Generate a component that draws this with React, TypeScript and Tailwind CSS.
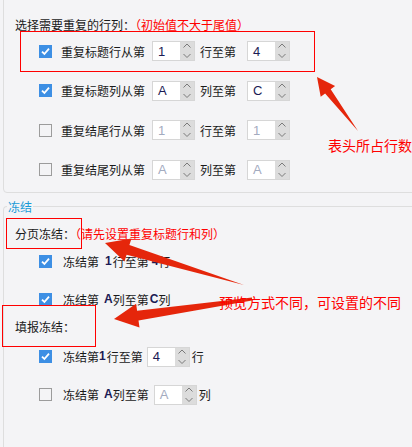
import React from "react";

const RED = "text-[#ff0000]";

function Check({ on }: { on?: boolean }) {
  if (on) {
    return (
      <span className="flex h-[13px] w-[13px] shrink-0 items-center justify-center bg-[#3d8fe4]">
        <svg width="13" height="13" viewBox="0 0 13 13">
          <path d="M3 6.6 L5.4 9 L10 3.6" fill="none" stroke="#fff" strokeWidth="1.8" />
        </svg>
      </span>
    );
  }
  return <span className="h-[13px] w-[13px] shrink-0 border border-[#9c9c9c]" />;
}

function Spin({ value, disabled }: { value: string; disabled?: boolean }) {
  return (
    <div className="flex h-[20px] w-[43px] shrink-0 border border-[#d6d6d6] bg-white">
      <div
        className={`flex flex-1 items-center pl-[5px] font-['Liberation_Sans',sans-serif] text-[13px] ${
          disabled ? "text-[#a3abbf]" : "text-[#1b1b55]"
        }`}
      >
        {value}
      </div>
      <div className="w-[14px] bg-[#dcdcdc]">
        <svg width="14" height="18" viewBox="0 0 14 18">
          <path d="M3.5 5.5 L7 2 L10.5 5.5" fill="none" stroke="#7a7a7a" strokeWidth="1" />
          <path d="M3.5 12 L7 15.5 L10.5 12" fill="none" stroke="#7a7a7a" strokeWidth="1" />
        </svg>
      </div>
    </div>
  );
}

function RepeatRow({ on, label, mid, from, to, disabled }: {
  on?: boolean; label: string; mid: string; from: string; to: string; disabled?: boolean;
}) {
  return (
    <div className="flex h-[20px] items-center">
      <Check on={on} />
      <span className="ml-[9px]">{label}</span>
      <span className="ml-[7px]"><Spin value={from} disabled={disabled} /></span>
      <span className="ml-[5px]">{mid}</span>
      <span className="ml-[11px]"><Spin value={to} disabled={disabled} /></span>
    </div>
  );
}

const B = "font-['Liberation_Sans',sans-serif] font-bold text-[12px] leading-[17px] text-[#1b1b55]";

export default function App() {
  return (
    <div className="relative h-[447px] w-[412px] overflow-hidden bg-[#f4f4f6] font-['Noto_Sans_CJK_SC',sans-serif] text-[12px] leading-[17px] text-[#1a1a1a]">
      {/* 重复 */}
      <div className="ml-[3px] mt-[-8px] w-[430px] rounded-[4px] border border-[#dedede] pb-[12px]">
        <div className="ml-[3px] mt-[-9px] w-fit bg-[#f4f4f6] px-[1px] text-[#1a9bd7]">重复</div>
        <div className="ml-[11px] mt-[14.5px]">
          选择需要重复的行列：<span className={RED}>（初始值不大于尾值）</span>
        </div>
        <div className="ml-[35px] mt-[8.5px] flex flex-col gap-[19.5px]">
          <RepeatRow on label="重复标题行从第" mid="行至第" from="1" to="4" />
          <RepeatRow on label="重复标题列从第" mid="列至第" from="A" to="C" />
          <RepeatRow label="重复结尾行从第" mid="行至第" from="1" to="1" disabled />
          <RepeatRow label="重复结尾列从第" mid="列至第" from="A" to="A" disabled />
        </div>
      </div>

      {/* 冻结 */}
      <div className="ml-[3px] mt-[13px] h-[260px] w-[430px] rounded-tl-[4px] border-l border-t border-[#dedede]">
        <div className="ml-[3px] mt-[-9px] w-fit bg-[#f4f4f6] px-[1px] text-[#1a9bd7]">冻结</div>
        <div className="ml-[11px] mt-[10px]">
          分页冻结：<span className={RED}>（请先设置重复标题行和列）</span>
        </div>
        <div className="ml-[35px] mt-[10px] flex flex-col gap-[18px]">
          <div className="flex h-[20px] items-center">
            <Check on />
            <span className="ml-[11px]">冻结第</span>
            <span className={`ml-[6px] ${B}`}>1</span>
            <span className="ml-[1px]">行至第</span>
            <span className={`ml-[3px] ${B}`}>4</span>
            <span>行</span>
          </div>
          <div className="flex h-[20px] items-center">
            <Check on />
            <span className="ml-[11px]">冻结第</span>
            <span className={`ml-[5px] ${B}`}>A</span>
            <span>列至第</span>
            <span className={`ml-[1px] ${B}`}>C</span>
            <span>列</span>
          </div>
        </div>
        <div className="ml-[11px] mt-[8.5px]">填报冻结：</div>
        <div className="ml-[35px] mt-[11.5px] flex flex-col gap-[18px]">
          <div className="flex h-[20px] items-center">
            <Check on />
            <span className="ml-[11px]">冻结第</span>
            <span className={B}>1</span>
            <span className="ml-[1px]">行至第</span>
            <span className="ml-[4px]"><Spin value="4" /></span>
            <span className="ml-[2px]">行</span>
          </div>
          <div className="flex h-[20px] items-center">
            <Check />
            <span className="ml-[11px]">冻结第</span>
            <span className={`ml-[5px] ${B}`}>A</span>
            <span>列至第</span>
            <span className="ml-[5px]"><Spin value="A" disabled /></span>
            <span className="ml-[2px]">列</span>
          </div>
        </div>
      </div>

      {/* annotations */}
      <div className="pointer-events-none absolute left-[20px] top-[31px] h-[41px] w-[295px] border border-[#ff0000]" />
      <div className="pointer-events-none absolute left-[6px] top-[218px] h-[31px] w-[76px] border border-[#ff0000]" />
      <div className="pointer-events-none absolute left-[2px] top-[305px] h-[42px] w-[94px] border border-[#ff0000]" />

      <svg className="pointer-events-none absolute left-0 top-0" width="412" height="447" viewBox="0 0 412 447">
        <polygon fill="#e5260b" points="317,77 335.1,85.9 330.7,89.2 358,131 325.1,93.4 320.7,96.7" />
        <polygon fill="#e5260b" points="105,243 131.5,238.4 129.4,245.1 244,285 126.6,254.7 124.5,261.4" />
        <polygon fill="#e5260b" points="114,319 136.1,303.7 137.1,310.7 252,297.5 252,300.5 138.5,320.5 139.5,327.5" />
      </svg>

      <div className={`pointer-events-none absolute left-[328px] top-[136px] whitespace-nowrap text-[14px] leading-[18px] ${RED}`}>
        表头所占行数
      </div>
      <div className={`pointer-events-none absolute left-[219px] top-[293px] whitespace-nowrap text-[14px] leading-[18px] ${RED}`}>
        预览方式不同，可设置的不同
      </div>
    </div>
  );
}
